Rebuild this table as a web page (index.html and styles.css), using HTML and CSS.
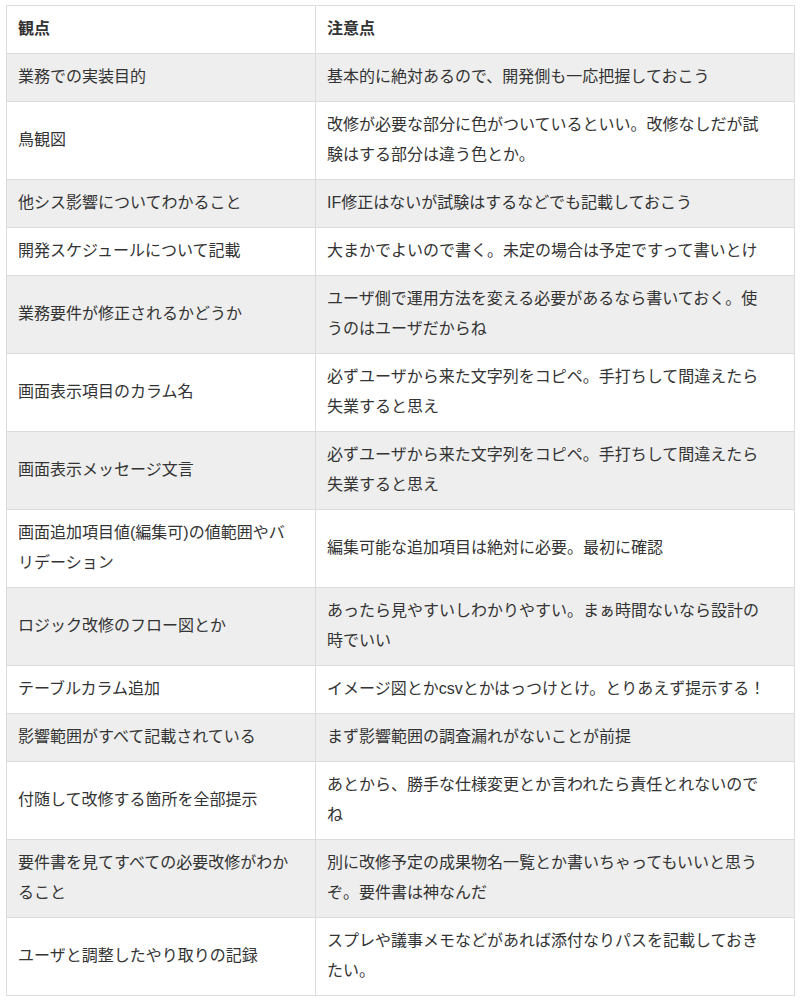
FILE: index.html
```html
<!DOCTYPE html>
<html lang="ja">
<head>
<meta charset="utf-8">
<title>観点と注意点</title>
<link rel="stylesheet" href="styles.css">
</head>
<body>
<div class="page">
<table class="points">
<colgroup><col class="col-view"><col class="col-note"></colgroup>
<thead>
<tr><th class="cell-view">観点</th><th class="cell-note">注意点</th></tr>
</thead>
<tbody>
<tr><td class="cell-view">業務での実装目的</td><td class="cell-note">基本的に絶対あるので、開発側も一応把握しておこう</td></tr>
<tr><td class="cell-view">鳥観図</td><td class="cell-note">改修が必要な部分に色がついているといい。改修なしだが試験はする部分は違う色とか。</td></tr>
<tr><td class="cell-view">他シス影響についてわかること</td><td class="cell-note">IF修正はないが試験はするなどでも記載しておこう</td></tr>
<tr><td class="cell-view">開発スケジュールについて記載</td><td class="cell-note">大まかでよいので書く。未定の場合は予定ですって書いとけ</td></tr>
<tr><td class="cell-view">業務要件が修正されるかどうか</td><td class="cell-note">ユーザ側で運用方法を変える必要があるなら書いておく。使うのはユーザだからね</td></tr>
<tr><td class="cell-view">画面表示項目のカラム名</td><td class="cell-note">必ずユーザから来た文字列をコピペ。手打ちして間違えたら失業すると思え</td></tr>
<tr><td class="cell-view">画面表示メッセージ文言</td><td class="cell-note">必ずユーザから来た文字列をコピペ。手打ちして間違えたら失業すると思え</td></tr>
<tr><td class="cell-view">画面追加項目値(編集可)の値範囲やバリデーション</td><td class="cell-note">編集可能な追加項目は絶対に必要。最初に確認</td></tr>
<tr><td class="cell-view">ロジック改修のフロー図とか</td><td class="cell-note">あったら見やすいしわかりやすい。まぁ時間ないなら設計の時でいい</td></tr>
<tr><td class="cell-view">テーブルカラム追加</td><td class="cell-note">イメージ図とかcsvとかはっつけとけ。とりあえず提示する！</td></tr>
<tr><td class="cell-view">影響範囲がすべて記載されている</td><td class="cell-note">まず影響範囲の調査漏れがないことが前提</td></tr>
<tr><td class="cell-view">付随して改修する箇所を全部提示</td><td class="cell-note">あとから、勝手な仕様変更とか言われたら責任とれないのでね</td></tr>
<tr><td class="cell-view">要件書を見てすべての必要改修がわかること</td><td class="cell-note">別に改修予定の成果物名一覧とか書いちゃってもいいと思うぞ。要件書は神なんだ</td></tr>
<tr><td class="cell-view">ユーザと調整したやり取りの記録</td><td class="cell-note">スプレや議事メモなどがあれば添付なりパスを記載しておきたい。</td></tr>
</tbody>
</table>
</div>
</body>
</html>
```
FILE: styles.css
```css
html, body {
  margin: 0;
  padding: 0;
  background: #ffffff;
}

.page {
  padding: 5px 6px;
}

.points {
  width: 788px;
  border-collapse: collapse;
  table-layout: fixed;
  font-family: "Liberation Sans", "Noto Sans CJK JP", sans-serif;
  font-size: 16px;
  line-height: 30px;
  color: #333333;
}

.col-view { width: 309px; }
.col-note { width: 479px; }

.points th,
.points td {
  border: 1px solid #dcdcdc;
  padding: 8px 17px 9px 11px;
  text-align: left;
  vertical-align: middle;
  word-break: break-all;
}

.points th {
  font-weight: bold;
  background: #ffffff;
}

.points td.cell-note,
.points th.cell-note {
  padding-right: 26px;
}

.points tbody tr:nth-child(odd) td {
  background: #eeeeee;
}

.points tbody tr:nth-child(even) td {
  background: #ffffff;
}
```
